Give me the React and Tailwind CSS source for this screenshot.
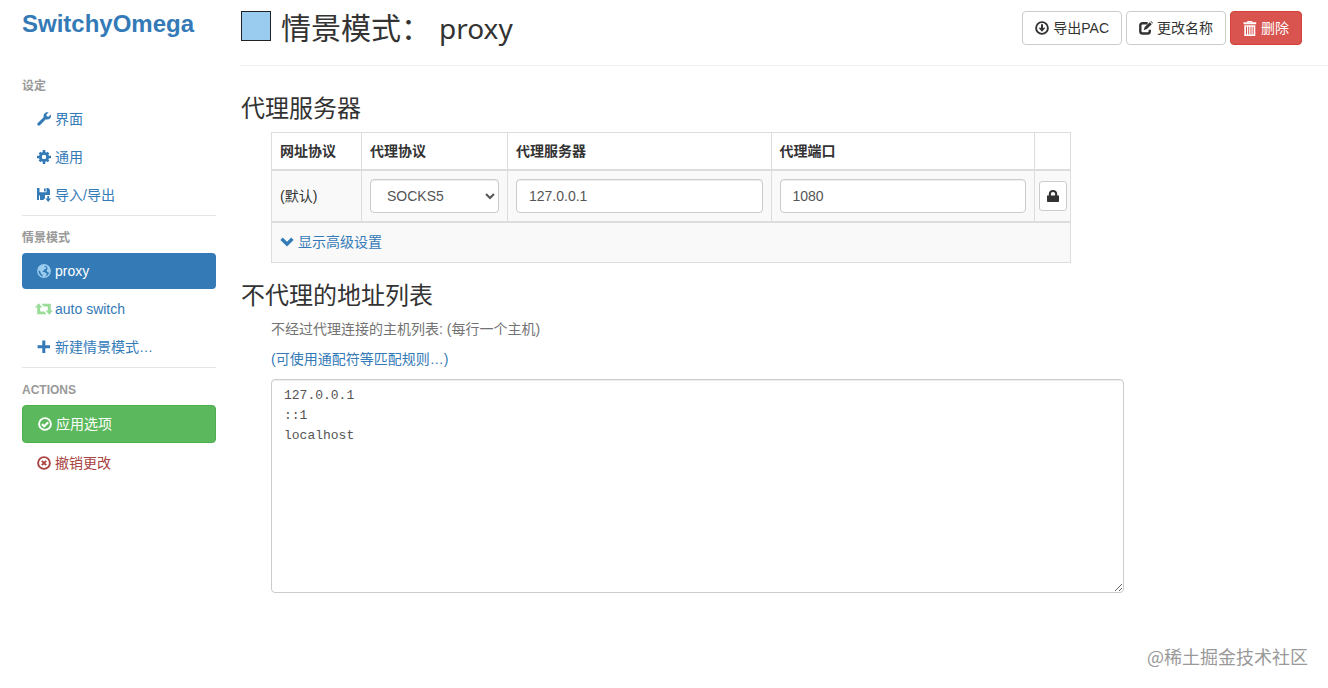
function Svg({ size = "size-[14px]", box = "0 0 14 14", className = "", children }) {
  return (
    <svg viewBox={box} className={`${size} shrink-0 ${className}`} fill="currentColor" aria-hidden="true">
      {children}
    </svg>
  );
}

const WrenchIcon = () => (
  <Svg>
    <path d="M11.600.5L9.400 2.600l.3 1.700 1.700.4L13.700 2.500C14.300 4.200 13.800 5.900 12.600 6.800 11.500 7.600 10.100 7.800 8.800 7.300L3 13.200C2.300 13.900 1.400 13.800.8 13.200.1 12.600.1 11.700.8 11L6.700 5.300C6.300 4 6.500 2.500 7.500 1.400 8.600.2 10.100-.1 11.600.5z" />
  </Svg>
);

const CogIcon = () => (
  <Svg>
    <path d="M5.700 0h2.600v14H5.700zM0 5.700h14v2.600H0z" clipPath="url(#cog-hole)" />
    <g clipPath="url(#cog-hole)">
      <path d="M5.700.7h2.600v12.600H5.700z" transform="rotate(45 7 7)" />
      <path d="M5.700.7h2.600v12.600H5.700z" transform="rotate(-45 7 7)" />
    </g>
    <circle cx="7" cy="7" r="3.700" fill="none" stroke="currentColor" strokeWidth="2.800" />
    <clipPath id="cog-hole">
      <path clipRule="evenodd" d="M0 0h14v4.600H0zM0 9.400h14V14H0zM0 4.600h4.600v4.800H0zM9.400 4.600H14v4.800H9.400z" />
    </clipPath>
  </Svg>
);

const FloppyIcon = () => (
  <Svg>
    <path fillRule="evenodd" d="M0 0h2.500v4.200h7V0h1.700L13 1.800V7H8v3.200L6.200 12H3V7.400H2V12H0zM7 .6h1.700v2.900H7z" />
    <path d="M10.300 8h1.800v2.600H14L11.200 14 8.400 10.600h1.900z" />
  </Svg>
);

const GlobeIcon = () => (
  <Svg>
    <circle cx="7" cy="7" r="6.200" fill="none" stroke="currentColor" strokeWidth="1.400" />
    <path d="M1 5.500C1.700 2.700 4 1 6.800.8L8.200 2l-.8 1.200L9.200 3l-.3 1.700-1.700.8-.5 1.300-1.400.4.8.9 1.800.2 1.900 1.400-.6 1.800-1.400 1.200-.7 1.100-1.200-.5-.3-2.200-1.500-1.400L3.200 7.600z" />
    <path d="M9.400 1.200l2.900 2.200 1.200 3.800-1.700 1.600-1.600-1-.6-1.700 1.300-1.400-.9-1.100z" />
  </Svg>
);

const RetweetIcon = () => (
  <Svg size="h-[14px] w-[18px]" box="0 0 18 14">
    <path d="M3.700 1.200L7.400 5.600H5.200V9.600h4.100l2.200 2.600H2.200V5.600H0z" />
    <path d="M14.300 12.800L10.600 8.400h2.200V4.400H8.700L6.500 1.800h9.300v6.600H18z" />
  </Svg>
);

const PlusIcon = () => (
  <Svg>
    <path d="M5.300.5h3v4.700H13v3H8.300v4.700h-3V8.200H.6v-3h4.700z" />
  </Svg>
);

const Ring = () => <circle cx="7" cy="7" r="5.900" fill="none" stroke="currentColor" strokeWidth="1.900" />;

const OkCircleIcon = () => (
  <Svg>
    <Ring />
    <path d="M4 7.100l2.200 2.200L10.200 5.200" fill="none" stroke="currentColor" strokeWidth="2.200" />
  </Svg>
);

const RemoveCircleIcon = () => (
  <Svg>
    <Ring />
    <path d="M4.800 4.800l4.400 4.400M9.200 4.800L4.800 9.200" fill="none" stroke="currentColor" strokeWidth="1.900" />
  </Svg>
);

const DownloadIcon = () => (
  <Svg>
    <Ring />
    <path d="M6 3.200h2v3.600h2.500L7 10.800 3.500 6.800H6z" />
  </Svg>
);

const EditIcon = () => (
  <Svg>
    <path d="M8.600 2.200H3.600Q1.300 2.200 1.300 4.500v5.700Q1.300 12.500 3.600 12.500h4.900Q10.800 12.500 10.800 10.200V8.800" fill="none" stroke="currentColor" strokeWidth="2.400" />
    <path d="M10.800 1.300l2 2-4.900 4.800-3.200 1.100 1-3.300zM11.500.6l.6-.6L14 1.900l-.5.7z" />
  </Svg>
);

const TrashIcon = () => (
  <Svg size="h-[15px] w-[14px]" box="0 0 14 15">
    <path fillRule="evenodd" d="M4.300 1.300V0h5v1.300H13.200v2H.5v-2zM5.500 1.300h2.700V1H5.500z" />
    <path fillRule="evenodd" d="M1.300 4.200h11V15h-11zM3 5.700v7.700h1V5.700zM5.200 5.700v7.700h1V5.700zM7.500 5.700v7.700h1V5.700zM9.700 5.700v7.700h1V5.700z" />
  </Svg>
);

const LockIcon = () => (
  <Svg size="size-[12px]" box="0 0 12 12">
    <path fillRule="evenodd" d="M0 5.500h1.800V3.800C1.800 1.500 3.500 0 6 0s4.200 1.500 4.200 3.800v1.700H12v5.700q0 .8-.8.8H.8q-.8 0-.8-.8zM3.900 5.500h4.200V3.800C8.100 2.600 7.300 1.900 6 1.900s-2.100.7-2.100 1.900z" />
  </Svg>
);

const ChevronIcon = () => (
  <Svg>
    <path d="M.4 5.100L2.700 2.600 7 6.700 11.300 2.600l2.300 2.500L7 11.500z" />
  </Svg>
);

function NavHeader({ children, first }) {
  return (
    <li className={`flex items-center text-xs font-bold uppercase text-[#999] ${first ? "h-8 pt-[2px]" : "h-[37px] pt-[6px]"}`}>
      {children}
    </li>
  );
}

function NavItem({ icon, label, style = "h-9 text-[#337ab7]" }) {
  return (
    <li className="mb-[2px]">
      <a href="#" className={`flex items-center rounded px-[15px] ${style}`}>
        <span className="flex w-[18px] shrink-0 justify-start">{icon}</span>
        <span>{label}</span>
      </a>
    </li>
  );
}

const Divider = () => <li role="separator" className="h-px bg-[#e5e5e5]" />;

function ToolButton({ icon, children, tone = "border-[#ccc] bg-white text-[#333]" }) {
  return (
    <button type="button" className={`flex h-[34px] items-center gap-1 rounded border px-3 ${tone}`}>
      {icon}
      <span>{children}</span>
    </button>
  );
}

const field =
  "block h-[34px] w-full rounded border border-[#ccc] bg-white px-3 text-sm text-[#555] shadow-[inset_0_1px_1px_rgba(0,0,0,0.075)]";
const cell = "border border-[#ddd] p-2";

export default function App() {
  return (
    <div className="flex min-h-screen bg-white font-['Liberation_Sans','Noto_Sans_CJK_SC',sans-serif] text-sm leading-5 text-[#333]">
      <nav className="ml-[22px] w-[194px] shrink-0">
        <h1 className="pt-[10px] text-2xl leading-7 font-bold">
          <a href="#" className="text-[#337ab7]">SwitchyOmega</a>
        </h1>
        <ul className="mt-[31px]">
          <NavHeader first>设定</NavHeader>
          <NavItem icon={<WrenchIcon />} label="界面" />
          <NavItem icon={<CogIcon />} label="通用" />
          <NavItem icon={<FloppyIcon />} label="导入/导出" />
          <Divider />
          <NavHeader>情景模式</NavHeader>
          <NavItem
            icon={<span className="text-[#99ccee]"><GlobeIcon /></span>}
            label="proxy"
            style="h-9 bg-[#337ab7] text-white"
          />
          <NavItem
            icon={<span className="-ml-[2px] text-[#99dd99]"><RetweetIcon /></span>}
            label="auto switch"
          />
          <NavItem icon={<PlusIcon />} label="新建情景模式…" />
          <Divider />
          <NavHeader>Actions</NavHeader>
          <NavItem icon={<OkCircleIcon />} label="应用选项" style="h-[38px] border border-[#4cae4c] bg-[#5cb85c] text-white" />
          <NavItem icon={<RemoveCircleIcon />} label="撤销更改" style="h-9 text-[#a94442]" />
        </ul>
      </nav>

      <main className="relative ml-6 min-w-0 flex-1">
        <header className="flex h-[66px] items-start justify-between border-b border-[#eee] pt-[11px] pr-[26px]">
          <div className="flex items-start pl-px">
            <input type="color" aria-label="颜色" defaultValue="#99ccee" className="size-[30px] appearance-none border border-[#222] bg-[#99ccee] p-0 [&::-webkit-color-swatch-wrapper]:p-0 [&::-webkit-color-swatch]:border-0" />
            <h2 className="ml-[10px] flex items-baseline font-['Noto_Sans','Noto_Sans_CJK_SC',sans-serif] text-[30px] leading-[33px]">
              <span>情景模式：</span>
              <span className="ml-2 text-[28px]">proxy</span>
            </h2>
          </div>
          <div className="flex gap-1">
            <ToolButton icon={<DownloadIcon />}>导出PAC</ToolButton>
            <ToolButton icon={<EditIcon />}>更改名称</ToolButton>
            <ToolButton icon={<TrashIcon />} tone="border-[#d43f3a] bg-[#d9534f] text-white">删除</ToolButton>
          </div>
        </header>

        <section className="pt-[30px]">
          <h3 className="pl-px text-2xl leading-[26px]">代理服务器</h3>
          <div className="mt-[10px] ml-[31px] max-w-[800px]">
            <table className="w-full table-fixed border-collapse border border-[#ddd]">
              <colgroup>
                <col className="w-[90px]" />
                <col className="w-[146px]" />
                <col />
                <col />
                <col className="w-9" />
              </colgroup>
              <thead>
                <tr className="text-left">
                  <th className={`${cell} border-b-2`}>网址协议</th>
                  <th className={`${cell} border-b-2`}>代理协议</th>
                  <th className={`${cell} border-b-2`}>代理服务器</th>
                  <th className={`${cell} border-b-2`}>代理端口</th>
                  <td className={`${cell} border-b-2`} />
                </tr>
              </thead>
              <tbody>
                <tr className="bg-[#f9f9f9]">
                  <td className={cell}>(默认)</td>
                  <td className={cell}>
                    <select aria-label="代理协议" defaultValue="SOCKS5" className={field}>
                      <option>HTTP</option>
                      <option>HTTPS</option>
                      <option>SOCKS4</option>
                      <option>SOCKS5</option>
                    </select>
                  </td>
                  <td className={cell}>
                    <input type="text" aria-label="代理服务器" defaultValue="127.0.0.1" className={field} />
                  </td>
                  <td className={cell}>
                    <input type="text" aria-label="代理端口" defaultValue="1080" className={field} />
                  </td>
                  <td className="border border-[#ddd] p-0">
                    <button type="button" aria-label="代理登录" className="mx-auto flex h-[30px] w-7 items-center justify-center rounded-[3px] border border-[#ccc] bg-white">
                      <LockIcon />
                    </button>
                  </td>
                </tr>
              </tbody>
              <tbody>
                <tr className="bg-[#f9f9f9]">
                  <td colSpan={5} className="border border-t-2 border-[#ddd] px-2 pt-[9px] pb-[10px]">
                    <a href="#" className="inline-flex items-center gap-1 align-top text-[#337ab7]">
                      <ChevronIcon />
                      <span>显示高级设置</span>
                    </a>
                  </td>
                </tr>
              </tbody>
            </table>
          </div>
        </section>

        <section className="pt-5">
          <h3 className="pl-px text-2xl leading-[26px]">不代理的地址列表</h3>
          <div className="mt-[10px] ml-[31px] max-w-[853px]">
            <label htmlFor="bypass" className="block text-[#737373]">不经过代理连接的主机列表: (每行一个主机)</label>
            <a href="#" className="mt-[10px] block text-[#337ab7]">(可使用通配符等匹配规则…)</a>
            <textarea
              id="bypass"
              rows={10}
              spellCheck={false}
              defaultValue={"127.0.0.1\n::1\nlocalhost"}
              className="mt-[10px] block w-full rounded border border-[#ccc] bg-white px-3 py-[6px] font-['Liberation_Mono',monospace] text-[13px] leading-5 text-[#555] shadow-[inset_0_1px_1px_rgba(0,0,0,0.075)]"
            />
          </div>
        </section>
        <p className="absolute right-5 bottom-[18px] font-['Noto_Sans_CJK_SC',sans-serif] text-lg leading-7 text-[#999]">@稀土掘金技术社区</p>
      </main>
    </div>
  );
}
